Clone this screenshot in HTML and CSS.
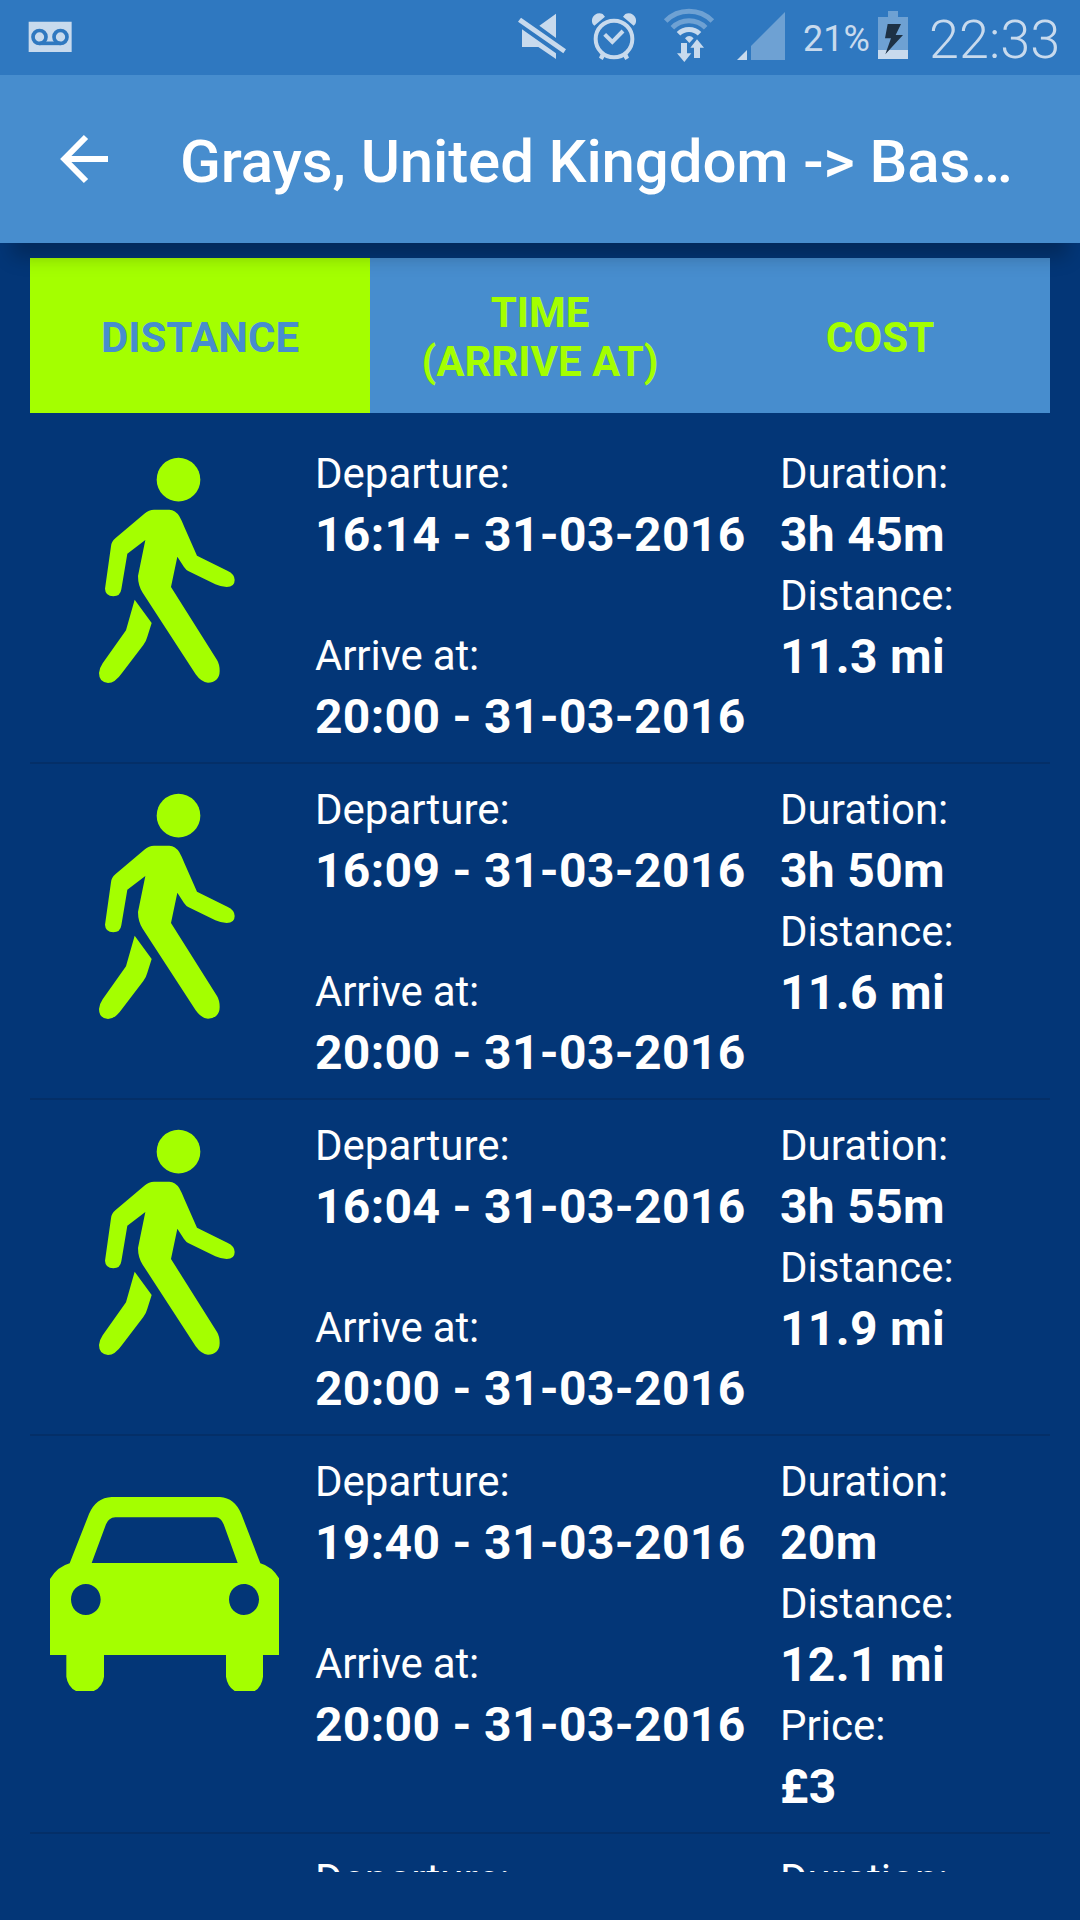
FILE: index.html
```html
<!DOCTYPE html>
<html lang="en">
<head>
<meta charset="utf-8">
<title>Grays, United Kingdom</title>
<link rel="stylesheet" href="styles.css">
</head>
<body>
<svg class="defs" width="0" height="0" aria-hidden="true">
  <symbol id="walk" viewBox="0 0 720 810">
    <circle cx="355.500" cy="149" r="65.500"/>
    <path d="M282 239H328Q346 239 358 259Q366 273 374 293L411 377L502 422Q524 432 524 450Q524 471 500 471Q484 471 466 463L386 424Q378 420 372 411L352 380L333 471L471 690Q479 703 479 723Q479 740 469 749Q459 758 444 758Q424 757 407 733L248 488Q234 467 234 438L256 330L202 371L184 478Q181 499 160 499Q136 498 135 476L153 349Q154 335 166 325L253 251Q267 239 282 239Z"/>
    <path d="M224 509L275 579L262 620Q259 632 250 645L186 729Q165 759 144 759Q117 757 117 729Q118 715 128 700L198 601Z"/>
  </symbol>
  <symbol id="car" viewBox="0 0 840 720">
    <path fill-rule="evenodd" d="M245 81H570Q614 84 634 132L691 280Q725 289 747 325V555H699V620Q696 650 674 663H614Q592 649 588 620V555H222V620Q219 650 191 663H138Q113 650 109 620V555H60V327Q82 290 119 280L177 132Q198 83 245 81ZM256 142Q236 143 228 163L185 279H623L581 163Q573 143 558 142ZM167.500 342C142 342 123 363 123 388.500S142 435 167.500 435 212 414 212 388.500 193 342 167.500 342ZM642 342C617 342 597 363 597 388.500S617 435 642 435 687 414 687 388.500 667 342 642 342Z"/>
  </symbol>
</svg>

<div class="screen">
  <header class="status-bar">
    <svg class="voicemail" viewBox="84 63 132 96">
      <path class="lit" d="M86 65H215V156H86Z"/>
      <g class="reel"><circle cx="118.500" cy="111" r="19.500"/><circle cx="181.500" cy="111" r="19.500"/><path d="M118 130H182"/></g>
    </svg>
    <svg class="indicators" viewBox="0 0 870 225">
      <g class="lit">
        <path d="M63 53L198 148L190 160L54 65ZM168 41V114L118 77ZM66 88L168 160V177L115 141H66Z"/>
        <path d="M276 66Q274 52 285 44Q296 37 308 42L315 50L283 77Q277 74 276 66ZM408 66Q410 52 399 44Q388 37 376 42L369 50L401 77Q407 74 408 66ZM303 160L315 168L308 180L297 173ZM381 160L369 168L376 180L387 173Z"/>
        <path d="M555 115Q567 101 581 115L568 129ZM543 129H561V160H574L553 186L531 160H543ZM591 118L612 143H600V174H582V143H571Z"/>
        <path d="M741 150V180H711Z"/>
      </g>
      <g class="lit-line">
        <circle cx="342" cy="117" r="55"/>
        <path d="M314 103L337 126L369 93"/>
      </g>
      <path class="arc" d="M535.500 101.500A44.500 44.500 0 0 1 598.500 101.500"/>
      <path class="arc dim-line" d="M517 83A70.500 70.500 0 0 1 617 83M497 63A98.500 98.500 0 0 1 637 63"/>
      <path class="dim" d="M855 36V180H753V138Z"/>
    </svg>
    <span class="percent">21%</span>
    <svg class="battery" viewBox="264 33 90 144">
      <path class="dim" d="M294 33H324V51H354V150H264V51H294Z"/>
      <path class="lit" d="M264 150H354V177H264Z"/>
      <path class="bolt" d="M293 72H333L317 105H339L286 163L303 115H285Z"/>
    </svg>
    <span class="clock">22:33</span>
  </header>

  <div class="app-bar">
    <svg class="back" viewBox="180 402 144 150"><path d="M258 411L193 477L258 543M200 477H324"/></svg>
    <h1 class="title">Grays, United Kingdom -&gt; Bas…</h1>
  </div>

  <main class="content">
    <nav class="tabs">
      <div class="tab active">DISTANCE</div>
      <div class="tab two-line">TIME<br>(ARRIVE AT)</div>
      <div class="tab">COST</div>
    </nav>
    <section class="routes">
      <article class="route">
        <div class="mode"><svg class="walk"><use href="#walk"/></svg></div>
        <dl class="times"><dt>Departure:</dt><dd>16:14 - 31-03-2016</dd><dt class="arrive">Arrive at:</dt><dd>20:00 - 31-03-2016</dd></dl>
        <dl class="facts"><dt>Duration:</dt><dd>3h 45m</dd><dt>Distance:</dt><dd>11.3 mi</dd></dl>
      </article>
      <article class="route">
        <div class="mode"><svg class="walk"><use href="#walk"/></svg></div>
        <dl class="times"><dt>Departure:</dt><dd>16:09 - 31-03-2016</dd><dt class="arrive">Arrive at:</dt><dd>20:00 - 31-03-2016</dd></dl>
        <dl class="facts"><dt>Duration:</dt><dd>3h 50m</dd><dt>Distance:</dt><dd>11.6 mi</dd></dl>
      </article>
      <article class="route">
        <div class="mode"><svg class="walk"><use href="#walk"/></svg></div>
        <dl class="times"><dt>Departure:</dt><dd>16:04 - 31-03-2016</dd><dt class="arrive">Arrive at:</dt><dd>20:00 - 31-03-2016</dd></dl>
        <dl class="facts"><dt>Duration:</dt><dd>3h 55m</dd><dt>Distance:</dt><dd>11.9 mi</dd></dl>
      </article>
      <article class="route priced">
        <div class="mode"><svg class="car"><use href="#car"/></svg></div>
        <dl class="times"><dt>Departure:</dt><dd>19:40 - 31-03-2016</dd><dt class="arrive">Arrive at:</dt><dd>20:00 - 31-03-2016</dd></dl>
        <dl class="facts"><dt>Duration:</dt><dd>20m</dd><dt>Distance:</dt><dd>12.1 mi</dd><dt>Price:</dt><dd>£3</dd></dl>
      </article>
      <article class="route">
        <div class="mode"></div>
        <dl class="times"><dt>Departure:</dt></dl>
        <dl class="facts"><dt>Duration:</dt></dl>
      </article>
    </section>
  </main>
</div>
</body>
</html>
```

FILE: styles.css
```css
* { box-sizing: border-box; }

body {
  margin: 0;
  background: #033677;
  color: #fff;
  font-family: Roboto, sans-serif;
}

.defs { position: absolute; }

svg { display: block; flex: none; }

.screen {
  display: flex;
  flex-direction: column;
  width: 1080px;
  height: 1920px;
  padding-bottom: 48px;
  overflow: hidden;
}

/* Status bar */
.status-bar {
  display: flex;
  flex: none;
  height: 75px;
  background: #2f78c0;
  color: #c8daed;
}

.lit { fill: #c8daed; }
.dim { fill: #6ea1d3; }
.bolt { fill: #1d3145; }
.lit-line { fill: none; stroke: #c8daed; stroke-width: 12; }
.arc { fill: none; stroke: #c8daed; stroke-width: 15; }
.arc.dim-line { stroke: #6ea1d3; }
.reel { fill: none; stroke: #2f78c0; stroke-width: 11; }

.voicemail { width: 44px; height: 32px; margin: 21px 0 0 28px; }
.indicators { width: 290px; height: 75px; margin-left: 428px; }
.percent { width: 75px; margin-top: 18px; padding-left: 13px; font-size: 36px; line-height: 42px; white-space: nowrap; }
.battery { width: 30px; height: 48px; margin: 11px 0 0 13px; }
.clock { margin: 8px 0 0 21px; font-size: 54px; font-weight: 300; line-height: 64px; }

/* App bar */
.app-bar {
  display: flex;
  flex: none;
  align-items: center;
  height: 168px;
  background: #478dce;
  box-shadow: 0 26px 18px -12px rgba(0, 0, 0, .23);
  position: relative;
  z-index: 1;
}

.back { width: 48px; height: 50px; margin-left: 60px; fill: none; stroke: #fff; stroke-width: 18; }

.title {
  margin: 0 0 0 72px;
  padding-top: 6px;
  font-size: 60px;
  font-weight: 500;
  line-height: 70px;
  letter-spacing: -.12px;
  white-space: nowrap;
}

/* Results */
.content {
  flex: 1;
  min-height: 0;
  padding: 15px 30px 0;
  overflow: hidden;
}

.tabs {
  display: grid;
  grid-template-columns: repeat(3, 1fr);
  height: 155px;
  background: #478dce;
  color: #a4ff00;
}

.tab {
  display: flex;
  align-items: center;
  justify-content: center;
  padding-top: 4px;
  font-size: 42px;
  font-weight: 700;
  line-height: 49px;
  text-align: center;
}

.tab.active { background: #a4ff00; color: #478dce; }
.tab.two-line { padding-top: 2px; }

.routes { margin-top: 15px; }

.route {
  display: grid;
  grid-template-columns: 285px 465px 1fr;
  height: 336px;
  padding-top: 16px;
  border-bottom: 2px solid #042f68;
}

.route.priced { height: 398px; }

.mode { fill: #a4ff00; }
.walk { width: 240px; height: 270px; margin: -14px 0 0 30px; }
.car { width: 280px; height: 240px; margin-top: 18px; }

dl, dd { margin: 0; }
dt { font-size: 42px; line-height: 59px; }
dd { font-size: 48px; font-weight: 700; line-height: 63px; letter-spacing: .33px; white-space: nowrap; }
.arrive { margin-top: 60px; letter-spacing: -.15px; }
```
